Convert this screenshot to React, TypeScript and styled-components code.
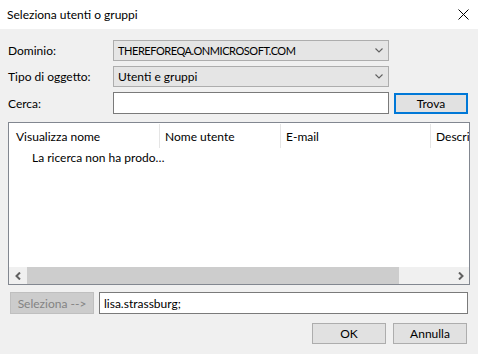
import React from "react";
import styled, { createGlobalStyle } from "styled-components";

const Global = createGlobalStyle`
  html, body { margin: 0; padding: 0; background: #f0f0f0; }
  body { font-family: "Segoe UI", Lato, "Liberation Sans", sans-serif; font-size: 12px; color: #000; }
  * { box-sizing: border-box; }
`;

const Window = styled.div`
  width: 478px;
  height: 354px;
  background: #f0f0f0;
  display: flex;
  flex-direction: column;
  overflow: hidden;
`;

const TitleBar = styled.div`
  height: 29px;
  background: #fff;
  display: flex;
  align-items: center;
  justify-content: space-between;
  padding: 0 8px 0 7px;
  font-size: 12px;
`;

const CloseBtn = styled.div`
  width: 12px;
  height: 12px;
  display: flex;
  align-items: center;
  justify-content: center;
  margin-right: 1px;
`;

const FormGrid = styled.div`
  display: grid;
  grid-template-columns: 100px 276px 74px;
  column-gap: 5px;
  row-gap: 5px;
  padding: 11px 0 0 8px;
  align-items: center;
`;

const Label = styled.div`
  line-height: 21px;
`;

const Combo = styled.div`
  grid-column: 2 / span 1;
  height: 21px;
  background: #e5e5e5;
  border: 1px solid #adadad;
  display: flex;
  align-items: center;
  justify-content: space-between;
  padding: 0 5px 0 4px;
`;

const ComboText = styled.span<{ $caps?: boolean }>`
  ${(p) => (p.$caps ? "font-size: 11px; letter-spacing: -0.45px;" : "")}
`;

const TextBox = styled.div<{ $w?: number }>`
  height: 22px;
  background: #fff;
  border: 1px solid #7a7a7a;
  display: flex;
  align-items: center;
  padding: 0 4px;
  ${(p) => (p.$w ? `width: ${p.$w}px;` : "")}
`;

const Button = styled.div<{ $variant?: "default" | "disabled" }>`
  height: 21px;
  width: 74px;
  display: flex;
  align-items: center;
  justify-content: center;
  background: ${(p) => (p.$variant === "disabled" ? "#cccccc" : "#e1e1e1")};
  border: ${(p) =>
    p.$variant === "default" ? "2px solid #0078d7" : p.$variant === "disabled" ? "1px solid #bfbfbf" : "1px solid #adadad"};
  color: ${(p) => (p.$variant === "disabled" ? "#838383" : "#000")};
`;

const SelectButton = styled(Button)`
  width: 84px;
  height: 22px;
`;

const List = styled.div`
  margin: 8px 8px 0 8px;
  height: 163px;
  border: 1px solid #828790;
  background: #fff;
  display: flex;
  flex-direction: column;
  overflow: hidden;
`;

const Header = styled.div`
  display: grid;
  grid-template-columns: 151px 121px 150px 60px;
  height: 25px;
  padding-top: 1px;
`;

const HeaderCell = styled.div<{ $first?: boolean }>`
  border-right: 1px solid #e5e5e5;
  padding-left: ${(p) => (p.$first ? 7 : 5)}px;
  display: flex;
  align-items: center;
  white-space: nowrap;
  overflow: hidden;
`;

const Body = styled.div`
  flex: 1;
  padding: 2px 0 0 23px;
`;

const ScrollBar = styled.div`
  height: 17px;
  background: #f0f0f0;
  display: flex;
  align-items: stretch;
`;

const ScrollArrow = styled.div`
  width: 17px;
  display: flex;
  align-items: center;
  justify-content: center;
`;

const ScrollTrack = styled.div`
  flex: 1;
  display: flex;
  padding: 0 1px 0 1px;
`;

const Thumb = styled.div`
  width: 372px;
  background: #cdcdcd;
`;

const SelectRow = styled.div`
  display: flex;
  align-items: center;
  gap: 5px;
  padding: 7px 0 0 10px;
`;

const ActionRow = styled.div`
  display: flex;
  justify-content: flex-end;
  gap: 7px;
  padding: 9px 11px 0 0;
`;

const Chevron = () => (
  <svg width="8" height="5" viewBox="0 0 8 5">
    <polyline points="0.5,0.5 4,4 7.5,0.5" fill="none" stroke="#606060" strokeWidth="1.1" />
  </svg>
);

const ArrowLeft = () => (
  <svg width="6" height="8" viewBox="0 0 6 8">
    <polyline points="5,0.5 1.5,4 5,7.5" fill="none" stroke="#606060" strokeWidth="2" />
  </svg>
);

const ArrowRight = () => (
  <svg width="6" height="8" viewBox="0 0 6 8">
    <polyline points="1,0.5 4.5,4 1,7.5" fill="none" stroke="#606060" strokeWidth="2" />
  </svg>
);

export default function App() {
  return (
    <Window>
      <Global />
      <TitleBar>
        <span>Seleziona utenti o gruppi</span>
        <CloseBtn>
          <svg width="11" height="11" viewBox="0 0 11 11">
            <path d="M0.5 0.5 L10.5 10.5 M10.5 0.5 L0.5 10.5" stroke="#000" strokeWidth="1" />
          </svg>
        </CloseBtn>
      </TitleBar>
      <FormGrid>
        <Label>Dominio:</Label>
        <Combo>
          <ComboText $caps>THEREFOREQA.ONMICROSOFT.COM</ComboText>
          <Chevron />
        </Combo>
        <div />
        <Label>Tipo di oggetto:</Label>
        <Combo>
          <ComboText>Utenti e gruppi</ComboText>
          <Chevron />
        </Combo>
        <div />
        <Label>Cerca:</Label>
        <TextBox />
        <Button $variant="default">Trova</Button>
      </FormGrid>
      <List>
        <Header>
          <HeaderCell $first>Visualizza nome</HeaderCell>
          <HeaderCell>Nome utente</HeaderCell>
          <HeaderCell>E-mail</HeaderCell>
          <HeaderCell>Descrizione</HeaderCell>
        </Header>
        <Body>La ricerca non ha prodo…</Body>
        <ScrollBar>
          <ScrollArrow>
            <ArrowLeft />
          </ScrollArrow>
          <ScrollTrack>
            <Thumb />
          </ScrollTrack>
          <ScrollArrow>
            <ArrowRight />
          </ScrollArrow>
        </ScrollBar>
      </List>
      <SelectRow>
        <SelectButton $variant="disabled">Seleziona --&gt;</SelectButton>
        <TextBox $w={369}>lisa.strassburg;</TextBox>
      </SelectRow>
      <ActionRow>
        <Button>OK</Button>
        <Button>Annulla</Button>
      </ActionRow>
    </Window>
  );
}
